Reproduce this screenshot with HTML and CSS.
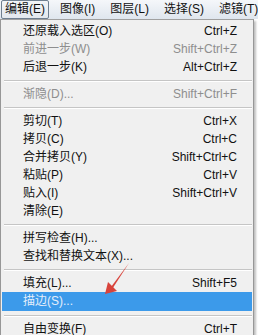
FILE: index.html
```html
<!DOCTYPE html>
<html>
<head>
	<title>编辑菜单</title>
	<link rel="stylesheet" href="styles.css">
</head>
<body>
	<div class="menubar">
		<span class="top-item active">编辑(E)</span>
		<span class="top-item">图像(I)</span>
		<span class="top-item">图层(L)</span>
		<span class="top-item">选择(S)</span>
		<span class="top-item">滤镜(T)</span>
	</div>
	<div class="dropdown">
		<div class="item"><span>还原载入选区(O)</span><span class="key">Ctrl+Z</span></div>
		<div class="item disabled"><span>前进一步(W)</span><span class="key">Shift+Ctrl+Z</span></div>
		<div class="item"><span>后退一步(K)</span><span class="key">Alt+Ctrl+Z</span></div>
		<div class="sep"></div>
		<div class="item disabled"><span>渐隐(D)...</span><span class="key">Shift+Ctrl+F</span></div>
		<div class="sep"></div>
		<div class="item"><span>剪切(T)</span><span class="key">Ctrl+X</span></div>
		<div class="item"><span>拷贝(C)</span><span class="key">Ctrl+C</span></div>
		<div class="item"><span>合并拷贝(Y)</span><span class="key">Shift+Ctrl+C</span></div>
		<div class="item"><span>粘贴(P)</span><span class="key">Ctrl+V</span></div>
		<div class="item"><span>贴入(I)</span><span class="key">Shift+Ctrl+V</span></div>
		<div class="item"><span>清除(E)</span></div>
		<div class="sep"></div>
		<div class="item"><span>拼写检查(H)...</span></div>
		<div class="item"><span>查找和替换文本(X)...</span></div>
		<div class="sep"></div>
		<div class="item"><span>填充(L)...</span><span class="key">Shift+F5</span></div>
		<div class="item selected"><span>描边(S)...</span></div>
		<div class="sep"></div>
		<div class="item"><span>自由变换(F)</span><span class="key">Ctrl+T</span></div>
	</div>

	<svg class="arrow" width="40" height="40" viewBox="0 0 40 40">
		<path d="M32 1 L14 25 L15.5 26.5 Z" fill="#d8433b"/>
		<path d="M8 32 L11 20 L20 29 Z" fill="#d8433b"/>
	</svg>
</body>
</html>
```

FILE: styles.css
```css
body {
	margin: 0;
	height: 335px;
	background-color: #fff;
	font-family: "Liberation Sans", "Noto Sans CJK SC", sans-serif;
	font-size: 12px;
	color: #111;
	position: relative;
	overflow: hidden;
}

.menubar {
	display: flex;
	gap: 7px;
	height: 19px;
	padding-left: 1px;
	background: linear-gradient(#f5f7fa, #dfe6ee);
	box-sizing: border-box;
	white-space: nowrap;
}

.top-item {
	flex-shrink: 0;
	line-height: 17px;
	padding: 0 3px;
	border: 1px solid transparent;
}

.top-item.active {
	border-color: #6f7f90;
	border-radius: 2px;
	background: linear-gradient(#f2f4f7, #e3e8ee);
}

.dropdown {
	width: 254px;
	padding: 2px 0 14px;
	background-color: #f0f0f0;
	border: 1px solid #979797;
	border-top-color: #a0a0a0;
	box-sizing: border-box;
	box-shadow: 2px 2px 2px rgba(0, 0, 0, 0.25);
}

.item {
	display: flex;
	justify-content: space-between;
	height: 18px;
	line-height: 18px;
	padding: 0 15px 0 21px;
	margin: 0 1px;
	white-space: nowrap;
}

.item.disabled {
	color: #8e8e8e;
}

.item.selected {
	height: 19px;
	line-height: 19px;
	background-color: #3c9aea;
	color: #e4eefa;
}

.sep {
	height: 1px;
	margin: 4px 1px 3px 3px;
	background-color: #c5c5c5;
	border-bottom: 1px solid #fff;
}

.arrow {
	position: absolute;
	left: 97px;
	top: 262px;
}
```
